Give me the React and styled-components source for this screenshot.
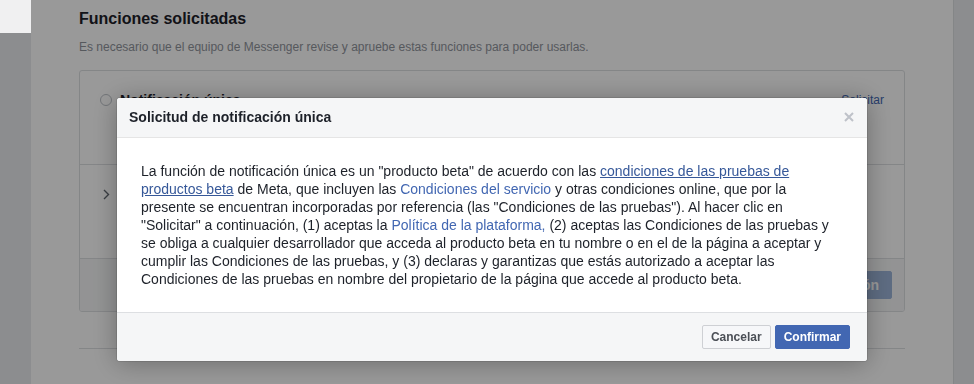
import React from "react";
import styled, { createGlobalStyle } from "styled-components";

const GlobalStyle = createGlobalStyle`
  html, body { margin: 0; padding: 0; }
  body {
    font-family: "Liberation Sans", Arial, Helvetica, sans-serif;
    background: #fff;
    overflow: hidden;
  }
  * { box-sizing: border-box; }
`;

const Page = styled.div`
  display: flex;
  height: 384px;
  overflow: hidden;
`;

const SideRail = styled.div`
  width: ${(p) => p.$width}px;
  flex: none;
  background: #e9ebee;
  ${(p) => (p.$right ? "border-left: 1px solid #dddfe2;" : "")}
`;

const WindowCorner = styled.div`
  position: absolute;
  top: 0;
  left: 0;
  width: 31px;
  height: 33px;
  background: #f0f0f1;
  z-index: 20;
`;

const Main = styled.main`
  flex: 1;
  background: #fff;
  padding: 9px 48px 0 48px;
`;

const SectionTitle = styled.h2`
  margin: 0;
  font-size: 16px;
  line-height: 20px;
  font-weight: bold;
  color: #1d2129;
`;

const SectionDesc = styled.p`
  margin: 10px 0 15px;
  font-size: 12px;
  line-height: 16px;
  color: #90949c;
`;

const Card = styled.div`
  border: 1px solid #dddfe2;
  border-radius: 3px;
  background: #fff;
  overflow: hidden;
`;

const Row = styled.div`
  display: flex;
  align-items: flex-start;
  gap: 8px;
  min-height: 94px;
  padding: 20px 20px 19px;
  border-bottom: 1px solid #dddfe2;
`;

const Radio = styled.span`
  flex: none;
  width: 12px;
  height: 12px;
  margin-top: 3px;
  border: 1px solid #bec3c9;
  border-radius: 50%;
  background: #fff;
`;

const ChevronBox = styled.span`
  flex: none;
  width: 12px;
  height: 18px;
  display: flex;
  align-items: center;
  justify-content: center;
`;

const RowContent = styled.div`
  flex: 1;
  min-width: 0;
`;

const FeatureName = styled.div`
  font-size: 14px;
  line-height: 18px;
  font-weight: bold;
  color: #1d2129;
`;

const RowLink = styled.a`
  flex: none;
  font-size: 12px;
  line-height: 18px;
  color: #4267b2;
  text-decoration: none;
`;

const CardFooter = styled.div`
  display: flex;
  justify-content: flex-end;
  padding: 12px;
  background: #f5f6f7;
`;

const DisabledButton = styled.button`
  height: 28px;
  padding: 0 12px;
  border: 1px solid #9cb4d8;
  border-radius: 2px;
  background: #9cb4d8;
  color: #fff;
  font-family: inherit;
  font-size: 14px;
  font-weight: bold;
`;

const Divider = styled.hr`
  margin: 36px 0 0;
  border: 0;
  border-top: 1px solid #dddfe2;
`;

const Overlay = styled.div`
  position: fixed;
  inset: 0;
  z-index: 10;
  background: rgba(0, 0, 0, 0.4);
  display: flex;
  align-items: flex-start;
  justify-content: center;
  padding: 98px 21px 0 31px;
`;

const Modal = styled.div`
  width: 750px;
  background: #fff;
  border-radius: 3px;
  overflow: hidden;
  box-shadow: 0 2px 26px rgba(0, 0, 0, 0.3), 0 0 0 1px rgba(0, 0, 0, 0.1);
`;

const ModalHeader = styled.div`
  display: flex;
  align-items: center;
  justify-content: space-between;
  padding: 10px 13px 11px 12px;
  background: #f5f6f7;
  border-bottom: 1px solid #e5e5e5;
`;

const ModalTitle = styled.h3`
  margin: 0;
  font-size: 14px;
  line-height: 18px;
  font-weight: bold;
  color: #1d2129;
`;

const CloseButton = styled.button`
  display: flex;
  align-items: center;
  justify-content: center;
  width: 10px;
  height: 10px;
  padding: 0;
  border: 0;
  background: none;
  color: #bec2c9;
`;

const ModalBody = styled.div`
  padding: 24px;
  font-size: 14px;
  line-height: 18px;
  color: #1d2129;
`;

const TermsLink = styled.a`
  color: ${(p) => (p.$underline ? "#365899" : "#4267b2")};
  text-decoration: ${(p) => (p.$underline ? "underline" : "none")};
`;

const ModalFooter = styled.div`
  display: flex;
  justify-content: flex-end;
  gap: 4px;
  padding: 12px 17px 12px 16px;
  background: #f5f6f7;
  border-top: 1px solid #dddfe2;
`;

const Button = styled.button`
  height: 24px;
  padding: 0 8px;
  border-radius: 2px;
  font-family: inherit;
  font-size: 12px;
  font-weight: bold;
  line-height: 22px;
  border: 1px solid ${(p) => (p.$primary ? "#4267b2" : "#ced0d4")};
  background: ${(p) => (p.$primary ? "#4267b2" : "#f6f7f9")};
  color: ${(p) => (p.$primary ? "#fff" : "#4b4f56")};
`;

const Chevron = () => (
  <svg width="7" height="11" viewBox="0 0 7 11" fill="none">
    <path d="M1 1l4.5 4.5L1 10" stroke="#606770" strokeWidth="1.4" />
  </svg>
);

const CloseIcon = () => (
  <svg width="10" height="10" viewBox="0 0 10 10">
    <path d="M1 1l8 8M9 1l-8 8" stroke="currentColor" strokeWidth="2" />
  </svg>
);

export default function App() {
  return (
    <>
      <GlobalStyle />
      <Page>
        <SideRail $width={31} />
        <Main>
          <SectionTitle>Funciones solicitadas</SectionTitle>
          <SectionDesc>
            Es necesario que el equipo de Messenger revise y apruebe estas funciones para poder usarlas.
          </SectionDesc>
          <Card>
            <Row>
              <Radio />
              <RowContent>
                <FeatureName>Notificación única</FeatureName>
              </RowContent>
              <RowLink href="#">Solicitar</RowLink>
            </Row>
            <Row>
              <ChevronBox>
                <Chevron />
              </ChevronBox>
              <RowContent />
            </Row>
            <CardFooter>
              <DisabledButton disabled>Enviar para revisión</DisabledButton>
            </CardFooter>
          </Card>
          <Divider />
        </Main>
        <SideRail $width={21} $right />
      </Page>
      <Overlay>
        <Modal role="dialog">
          <ModalHeader>
            <ModalTitle>Solicitud de notificación única</ModalTitle>
            <CloseButton aria-label="Cerrar">
              <CloseIcon />
            </CloseButton>
          </ModalHeader>
          <ModalBody>
            La función de notificación única es un "producto beta" de acuerdo con las{" "}
            <TermsLink href="#" $underline>
              condiciones de las pruebas de productos beta
            </TermsLink>{" "}
            de Meta, que incluyen las <TermsLink href="#">Condiciones del servicio</TermsLink> y otras
            condiciones online, que por la presente se encuentran incorporadas por referencia (las
            "Condiciones de las pruebas"). Al hacer clic en "Solicitar" a continuación, (1) aceptas la{" "}
            <TermsLink href="#">Política de la plataforma,</TermsLink> (2) aceptas las Condiciones de las
            pruebas y se obliga a cualquier desarrollador que acceda al producto beta en tu nombre o en el
            de la página a aceptar y cumplir las Condiciones de las pruebas, y (3) declaras y garantizas que
            estás autorizado a aceptar las Condiciones de las pruebas en nombre del propietario de la página
            que accede al producto beta.
          </ModalBody>
          <ModalFooter>
            <Button>Cancelar</Button>
            <Button $primary>Confirmar</Button>
          </ModalFooter>
        </Modal>
      </Overlay>
      <WindowCorner />
    </>
  );
}
